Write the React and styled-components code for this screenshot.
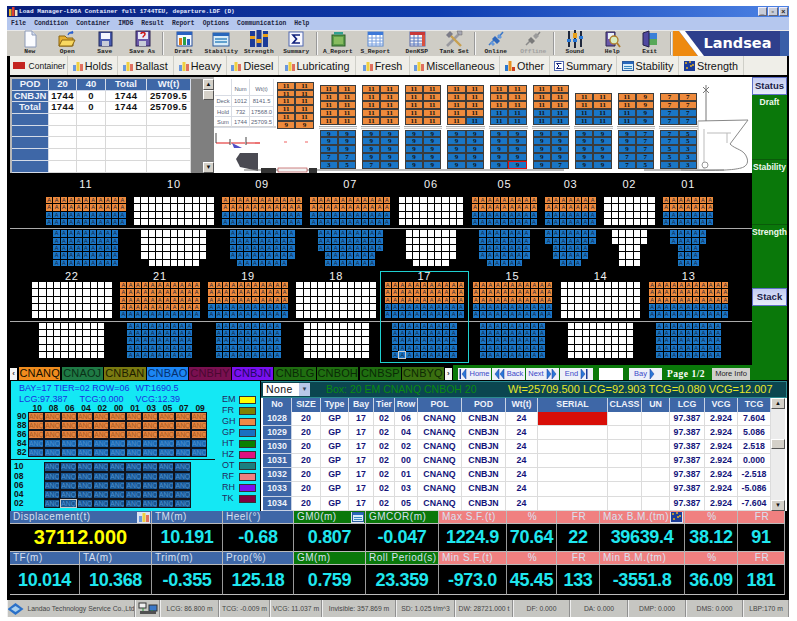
import React from "react";
import styled, { createGlobalStyle } from "styled-components";

const SANS = '"Liberation Sans", Arial, sans-serif';
const BITMAP = '"Liberation Mono", "Courier New", monospace';
const SERIF = '"Liberation Serif", "Times New Roman", serif';

const BLUE = "#3e67a7";
const GREEN = "#0a780a";
const SALMON = "#f08080";
const ORANGE = "#ee8a3c";
const CARGO = "#1a76c6";

const GlobalStyle = createGlobalStyle`
  html, body {
    margin: 0;
    padding: 0;
    background: #fff;
  }
  * {
    box-sizing: border-box;
  }
  svg {
    flex: none;
  }
`;

const Page = styled.div`
  width: 797px;
  height: 621px;
  padding: 6px 0 0 7px;
  overflow: hidden;
  font-family: ${SANS};
`;

const Window = styled.div`
  width: 782px;
  display: flex;
  flex-direction: column;
`;

/* title + menu */
const TitleBar = styled.div`
  height: 11px;
  display: flex;
  align-items: center;
  padding: 0 1px 0 2px;
  background: linear-gradient(90deg, #0a1f7a, #0d3cb0 55%, #4c82e4);
  color: #e6ecff;
  font: bold 6.1px/11px ${BITMAP};
  white-space: nowrap;
`;

const TitleText = styled.span`
  margin-left: 1px;
  flex: 1;
`;

const WinButtons = styled.div`
  display: flex;
  gap: 1px;
`;

const WinButton = styled.span`
  width: 9.5px;
  height: 9px;
  background: #c8ccd8;
  border: 1px solid #eef;
  border-right-color: #667;
  border-bottom-color: #667;
  color: #222;
  font: bold 7px/7px ${SANS};
  text-align: center;
`;

const MenuBar = styled.div`
  height: 13px;
  display: flex;
  align-items: center;
  gap: 8px;
  padding-left: 4px;
  background: #b5c7ee;
  color: #1c2440;
  font: bold 6.3px/13px ${BITMAP};
`;

/* toolbar */
const Toolbar = styled.div`
  height: 26px;
  display: flex;
  background: #cfcdc6;
  border-top: 1px solid #e8e8e8;
  padding-left: 4px;
`;

const Tool = styled.div`
  width: 37.5px;
  margin-left: ${(p) => p.$ml || 0}px;
  display: flex;
  flex-direction: column;
  align-items: center;
  color: ${(p) => (p.$off ? "#a0a0a0" : "#222")};
  font: bold 6.2px/9px ${BITMAP};
  white-space: nowrap;
`;

const ToolIcon = styled.div`
  height: 16px;
  display: flex;
  align-items: center;
`;

const ToolSep = styled.div`
  width: 2px;
  margin: 1px;
  border-left: 1px solid #999;
  border-right: 1px solid #f4f4f4;
`;

const Logo = styled.div`
  flex: 1;
  background: #2e3f8c;
  display: flex;
  align-items: center;
  overflow: hidden;
`;

const LogoMark = styled.svg`
  width: 31px;
  height: 25px;
`;

const LogoText = styled.span`
  color: #fff;
  font: bold 14.5px/25px "DejaVu Sans", ${SANS};
`;

const LogoEdge = styled.div`
  margin-left: auto;
  width: 9px;
  height: 25px;
  background: #3a5fa8;
`;

/* category tabs */
const TabBar = styled.div`
  height: 19px;
  display: flex;
  align-items: stretch;
  background: #efeee8;
  border-left: 3px solid #000;
  border-right: 2px solid #000;
`;

const Tab = styled.div`
  width: ${(p) => p.$w}px;
  display: flex;
  align-items: center;
  justify-content: center;
  gap: 2px;
  border-right: 1px solid #cfcfc8;
  color: #151515;
  font-size: ${(p) => p.$size || 10.8}px;
  white-space: nowrap;
`;

/* main frame */
const Frame = styled.div`
  background: #000;
  padding: 0 2px 5px 3px;
  display: flex;
  flex-direction: column;
`;

const Middle = styled.div`
  display: flex;
  height: 305px;
`;

const LeftPane = styled.div`
  width: 742px;
  display: flex;
  flex-direction: column;
`;

const TopRow = styled.div`
  height: 100px;
  display: flex;
  padding: 2px 0;
  background: #000;
`;

const PodPanel = styled.div`
  width: 204px;
  display: flex;
  background: #b8b8b8;
  padding: 2px 0 0 2px;
`;

const PodTable = styled.div`
  width: 179px;
  display: grid;
  grid-template-columns: 37px 28px 29px 41px 44px;
  grid-auto-rows: 11.7px;
  background: #fff;
`;

const PodHead = styled.div`
  background: ${BLUE};
  border-right: 1px solid #d4dbe8;
  border-bottom: 1px solid #d4dbe8;
  color: #eef2fa;
  font: bold 9.5px/10.5px ${SANS};
  text-align: center;
`;

const PodCell = styled.div`
  border-right: 1px solid #d8d8d8;
  border-bottom: 1px solid #d8d8d8;
  color: #111;
  font: bold 9.5px/10.5px ${SANS};
  letter-spacing: 0.4px;
  text-align: center;
`;

const Scroll = styled.div`
  width: ${(p) => p.$w}px;
  display: flex;
  flex-direction: column;
  background: ${(p) => p.$track};
`;

const ScrollBtn = styled.div`
  height: 11px;
  flex: none;
  background: #d4d0c8;
  border: 1px solid #fff;
  border-right-color: #555;
  border-bottom-color: #555;
  color: #111;
  font: 6px/8px ${SANS};
  text-align: center;
`;

const ScrollGap = styled.div`
  flex: ${(p) => p.$grow};
`;

const ScrollThumb = styled(ScrollBtn)`
  height: ${(p) => p.$h}px;
`;

const GrayStrip = styled.div`
  width: 12px;
  background: #7f7f7f;
`;

const ShipPanel = styled.div`
  position: relative;
  width: 538px;
  display: flex;
  background: #fff;
  overflow: hidden;
`;

const Hull = styled.svg`
  position: absolute;
  left: 0;
  top: 0;
`;

const LoadSummary = styled.div`
  position: relative;
  width: 63px;
  flex: none;
  height: 49px;
  padding: 2px 0 0 1px;
  display: grid;
  grid-template-columns: 17px 18px 24px;
  grid-template-rows: 17px repeat(3, 10.6px);
`;

const SummaryCell = styled.span`
  border-right: 1px solid #d8dce4;
  border-bottom: 1px solid #d8dce4;
  color: #5a6478;
  font: 5.8px/10px ${SANS};
  text-align: center;
  white-space: nowrap;
`;

const SummaryHead = styled(SummaryCell)`
  line-height: 20px;
`;

const ShipBays = styled.div`
  position: relative;
  display: flex;
  gap: 6px;
`;

const ShipBay = styled.div`
  width: 36.6px;
  display: flex;
  flex-direction: column;
`;

const DeckStack = styled.div`
  height: ${(p) => p.$h || 47.5}px;
  display: flex;
  flex-direction: column;
  justify-content: flex-end;
`;

const Hatch = styled.div`
  height: 3px;
  margin: 1px -1px 1px;
  background: #f4f4f4;
  border-top: 1px solid #aaa;
  border-bottom: 1px solid #ccc;
`;

const StackRow = styled.div`
  height: 7.9px;
  display: flex;
`;

const StackCell = styled.div`
  flex: 1;
  background: ${(p) => (p.$tone === "o" ? ORANGE : CARGO)};
  border: 1px solid ${(p) => (p.$hit ? "#e01010" : "#3c3c3c")};
  border-top-width: ${(p) => (p.$hit ? 1 : 0.5)}px;
  color: #111;
  font: bold 7px/6.5px ${SERIF};
  text-align: center;
`;

/* bay plan */
const BayArea = styled.div`
  position: relative;
  flex: 1;
  background: #000;
  display: flex;
  flex-direction: column;
`;

const DeckBand = styled.div`
  display: flex;
  gap: 8.5px;
  padding-left: ${(p) => p.$left}px;
  align-items: flex-end;
`;

const HoldBand = styled(DeckBand)`
  align-items: flex-start;
  margin-top: ${(p) => p.$mt}px;
`;

const Bay = styled.div`
  width: ${(p) => p.$cols * 7.33 - 1}px;
  display: flex;
  flex-direction: column;
  align-items: center;
  gap: 1px;
`;

const BayNo = styled.div`
  height: ${(p) => p.$h}px;
  padding-top: ${(p) => p.$pt}px;
  color: #f2f2f2;
  font: 11px/10px ${SANS};
  letter-spacing: 0.8px;
`;

const SlotRow = styled.div`
  display: flex;
  gap: 1px;
`;

const Slot = styled.div`
  width: 6.33px;
  height: 6.33px;
  background: ${(p) => (p.$tone === "o" ? ORANGE : p.$tone === "b" ? CARGO : "#fff")};
  outline: ${(p) => (p.$cursor ? "1px solid #c8c8c8" : "none")};
  color: #17233a;
  font: 5.5px/6.5px ${SANS};
  text-align: center;
  overflow: hidden;
`;

const BayRule = styled.div`
  height: 1px;
  margin-top: ${(p) => p.$mt}px;
  background: #aaa;
`;

const SelectBox = styled.div`
  position: absolute;
  left: 370px;
  top: 96px;
  width: 89px;
  height: 92px;
  border: 1.5px solid #1fd0d0;
`;

/* port tabs + page nav */
const PortStrip = styled.div`
  height: 15px;
  display: flex;
  background: #000;
`;

const PortTabs = styled.div`
  width: 443px;
  display: flex;
  align-items: center;
  gap: 1.2px;
  padding-top: 2px;
`;

const PortArrow = styled.div`
  width: 7px;
  height: 12px;
  margin-right: 0.8px;
  background: #f4f4f4;
  color: #333;
  font: bold 8px/12px ${SANS};
  text-align: center;
`;

const PortTab = styled.div`
  width: 41.4px;
  height: 13px;
  background: ${(p) => p.$bg};
  color: ${(p) => p.$fg};
  font: 11px/13px ${SANS};
  letter-spacing: 0.15px;
  text-align: center;
  white-space: nowrap;
  overflow: hidden;
`;

const PageNav = styled.div`
  flex: 1;
  display: flex;
  align-items: center;
  padding: 2px 0 0 5px;
  background: ${GREEN};
`;

const NavBtn = styled.div`
  width: ${(p) => p.$w || 33}px;
  height: 12px;
  margin-right: ${(p) => p.$mr || 1}px;
  display: flex;
  align-items: center;
  justify-content: center;
  gap: 2px;
  background: ${(p) => p.$bg || "#eef0f8"};
  color: ${(p) => p.$fg || "#3a48c8"};
  font: 7.5px/12px ${SANS};
  white-space: nowrap;
`;

const PageLabel = styled.div`
  width: 45px;
  color: #fff;
  font: bold 9.5px/12px ${SERIF};
  letter-spacing: 0.5px;
  white-space: nowrap;
`;

/* status column */
const StatusColumn = styled.div`
  width: 35px;
  display: flex;
  flex-direction: column;
  background: ${GREEN};
  border-top: 2px solid #000;
`;

const StatusBtn = styled.div`
  height: 18px;
  flex: none;
  background: linear-gradient(#c3ccf2, #e8ecfa);
  border: 1px solid #6070c8;
  color: #1a2048;
  font: bold 9.5px/16px ${SANS};
  text-align: center;
`;

const StatusSection = styled.div`
  height: ${(p) => p.$h}px;
  flex: none;
  padding-top: 2px;
  color: #eef8ee;
  font: bold 8.5px/11px ${SANS};
  text-align: center;
  border-top: ${(p) => (p.$line ? "1px solid #0a5a0a" : "none")};
`;

/* lower panels */
const Lower = styled.div`
  height: 131px;
  display: flex;
  padding-top: 1px;
  background: #000;
`;

const CyanPanel = styled.div`
  width: 249px;
  margin-left: 1px;
  display: flex;
  background: #14e8f4;
`;

const CyanLeft = styled.div`
  width: 209px;
  display: flex;
  flex-direction: column;
  padding-top: 2px;
`;

const InfoLine = styled.div`
  height: ${(p) => p.$h}px;
  padding-left: 8px;
  display: flex;
  gap: ${(p) => p.$gap}px;
  color: #1a30e0;
  font: 9px/${(p) => p.$h}px ${SANS};
  white-space: nowrap;
`;

const RowNums = styled.div`
  height: 8px;
  padding-left: 18px;
  display: flex;
  color: #111;
  font: bold 8.5px/8px ${SANS};
`;

const RowNum = styled.span`
  width: 16.3px;
  text-align: center;
`;

const StowRow = styled.div`
  height: 9.1px;
  display: flex;
`;

const StowLabel = styled.div`
  width: ${(p) => p.$w}px;
  padding-left: ${(p) => p.$pl}px;
  color: #111;
  font: bold 8.5px/9px ${SANS};
`;

const StowCell = styled.div`
  width: 16.3px;
  background: ${(p) => (p.$tone === "o" ? "#e48440" : p.$tone === "b" ? "#1a68b2" : "#185590")};
  border: 1px solid ${(p) => (p.$cursor ? "#c8c8c8" : "#10131c")};
  border-right-width: 0.5px;
  border-left-width: 0.5px;
  color: ${(p) => (p.$tone === "o" ? "#a85a20" : "#4d90d0")};
  font: 6.8px/7px ${SANS};
  text-align: center;
  overflow: hidden;
`;

const CyanRule = styled.div`
  height: 1px;
  margin: 2px 0 2px;
  width: 204px;
  background: #111;
`;

const Legend = styled.div`
  flex: 1;
  padding: 13px 0 0 2px;
  display: grid;
  grid-template-columns: 17px 17px;
  grid-auto-rows: 11px;
  align-items: center;
  color: #222a60;
  font: 9px/11px ${SANS};
`;

const Swatch = styled.div`
  height: 8px;
  background: ${(p) => p.$bg};
  border: 1px solid #333;
`;

const RightPane = styled.div`
  flex: 1;
  margin-left: 1px;
  display: flex;
  flex-direction: column;
  background: #fff;
`;

const InfoStrip = styled.div`
  height: 17px;
  display: flex;
  align-items: center;
  padding-left: 2px;
  background: #0b4650;
  border: 1px solid #2b8a90;
  border-left: none;
  font: 11px/15px ${SANS};
  white-space: nowrap;
`;

const NoneSelect = styled.div`
  width: 47px;
  height: 13px;
  display: flex;
  justify-content: space-between;
  background: #fff;
  color: #111;
  font: 10.5px/13px ${SANS};
  letter-spacing: 0.4px;
  padding-left: 3px;
`;

const SelectArrow = styled.span`
  width: 11px;
  background: #b8c8e8;
  color: #345;
  font: 6px/13px ${SANS};
  letter-spacing: 0;
  text-align: center;
`;

const BoxText = styled.span`
  margin-left: 16px;
  width: 182px;
  color: #0a8a10;
  font-size: 10.5px;
`;

const WeightText = styled.span`
  color: #e6e628;
`;

const TableRow = styled.div`
  flex: 1;
  display: flex;
  min-height: 0;
`;

const CargoTable = styled.div`
  width: 510px;
  padding-left: 2px;
  display: grid;
  grid-template-columns: 29px 29px 28px 25px 21px 23px 44px 44px 32px 70px 34px 28px 35px 33px 33px;
  grid-template-rows: 14px repeat(7, 14.1px);
  overflow: hidden;
`;

const HeadCell = styled.div`
  background: ${BLUE};
  border-right: 1px solid #c8d2e4;
  color: #eef2fa;
  font: bold 8.8px/13px ${SANS};
  text-align: center;
  white-space: nowrap;
`;

const NoCell = styled(HeadCell)`
  border-bottom: 1px solid #c8d2e4;
  line-height: 13.5px;
`;

const DataCell = styled.div`
  background: ${(p) => (p.$red ? "#d80e08" : "#fff")};
  border-right: 1px solid #dcdcdc;
  border-bottom: 1px solid #dcdcdc;
  color: #14147a;
  font: bold 8.8px/13.5px ${SANS};
  text-align: center;
`;

/* stats */
const StatsGrid = styled.div`
  display: grid;
  grid-template-columns: 70px 72px 71px 71px 72px 73px 68px 50px 43px 85px 53px 47px;
  grid-template-rows: 13px 28px 13px 30px;
  background: #000;
`;

const StatHead = styled.div`
  grid-column: span ${(p) => p.$span || 1};
  display: flex;
  align-items: center;
  justify-content: ${(p) => (p.$center ? "center" : "space-between")};
  padding: 0 1px 0 3px;
  background: ${(p) => p.$bg};
  border-right: 1px solid #bbb;
  border-bottom: 1px solid #bbb;
  color: ${(p) => p.$fg || "#d8e0f0"};
  font: 10px/12px ${SANS};
  letter-spacing: 0.5px;
  white-space: nowrap;
`;

const StatValue = styled.div`
  grid-column: span ${(p) => p.$span || 1};
  border-right: 1px solid #999;
  border-bottom: 1px solid #bbb;
  color: ${(p) => (p.$big ? "#ffff00" : "#1fe6ee")};
  font: bold ${(p) => (p.$big ? 20 : 18)}px/26px ${SANS};
  letter-spacing: ${(p) => (p.$big ? 0 : -0.35)}px;
  text-align: center;
  white-space: nowrap;
`;

const TallValue = styled(StatValue)`
  line-height: 30px;
`;

const HeadIcon = styled.span`
  display: flex;
  width: 13px;
  height: 11px;
  background: #dde4f2;
  align-items: center;
  justify-content: center;
`;

/* status bar */
const StatusBar = styled.div`
  height: 17px;
  display: flex;
  background: #c6c6c2;
  color: #444;
  font: 6.8px/16px ${SANS};
`;

const StatusItem = styled.div`
  width: ${(p) => p.$w}px;
  display: flex;
  align-items: center;
  justify-content: center;
  gap: 3px;
  border-right: 1px solid #8f8f8f;
  border-left: 1px solid #eee;
  white-space: nowrap;
  overflow: hidden;
`;

/* drawn bits */
const toolIcons = {
  new: (
    <>
      <path d="M5 1h7l4 4v12H5z" fill="#fbfcff" stroke="#8c9ab8" />
      <path d="M12 1v4h4" fill="#d8e0f0" stroke="#8c9ab8" />
    </>
  ),
  open: (
    <>
      <path d="M2 6h6l2 2h6v8H2z" fill="#e8b030" stroke="#8a6410" />
      <path d="M2 16l3-6h13l-3 6z" fill="#f8d860" stroke="#8a6410" />
      <path d="M11 5c1-3 4-3 5-2l-1-2M16 3l-3 0" fill="none" stroke="#2a60d0" strokeWidth="1.3" />
    </>
  ),
  save: (
    <>
      <rect x="4" y="2" width="13" height="14" fill="#4a5cb0" stroke="#20285c" />
      <rect x="6" y="3" width="9" height="6" fill="#f4f6ff" />
      <rect x="7" y="11" width="7" height="5" fill="#c8ccd8" />
    </>
  ),
  saveas: (
    <>
      <rect x="4" y="1" width="14" height="15" fill="#6a58a8" stroke="#2a2050" />
      <rect x="6" y="2" width="10" height="7" fill="#e8e8f8" />
      <rect x="7" y="11" width="7" height="5" fill="#c8ccd8" />
      <path d="M9 4c0-2 4-2 4 0 0 2-2 1.500-2 3.500" fill="none" stroke="#d01818" strokeWidth="1.5" />
    </>
  ),
  draft: (
    <>
      <rect x="3" y="2" width="15" height="14" fill="#f4f8ff" stroke="#28509c" />
      <rect x="3" y="2" width="15" height="3" fill="#2860c0" />
      <rect x="5" y="8" width="3" height="7" fill="#e07818" />
      <rect x="9" y="7" width="3" height="8" fill="#28a048" />
      <rect x="13" y="9" width="3" height="6" fill="#2860c0" />
    </>
  ),
  stability: (
    <>
      <rect x="2" y="3" width="16" height="13" fill="#d8ecf8" stroke="#2a5a9c" />
      <rect x="2" y="3" width="16" height="3" fill="#2868bc" />
      <path d="M4 9h12M4 12h12" stroke="#3a88c0" strokeWidth="1.5" />
    </>
  ),
  strength: (
    <>
      <rect x="1" y="1" width="5" height="16" fill="#1c3c98" />
      <rect x="7.500" y="0" width="5" height="17" fill="#1c3c98" />
      <rect x="14" y="1" width="5" height="16" fill="#1c3c98" />
      <rect x="1" y="6" width="5" height="3" fill="#e8a018" />
      <rect x="7.500" y="9" width="5" height="4" fill="#e8a018" />
      <rect x="14" y="4" width="5" height="3" fill="#e8a018" />
    </>
  ),
  summary: (
    <>
      <rect x="3" y="2" width="14" height="14" fill="#f8f8ff" stroke="#5068b0" />
      <path d="M14 5H7l3.500 4L7 13h7" fill="none" stroke="#10207c" strokeWidth="1.700" />
    </>
  ),
  areport: (
    <>
      <rect x="4" y="5" width="13" height="11" fill="#5e9c48" stroke="#2a5c28" />
      <rect x="6" y="7" width="9" height="7" fill="#88bc60" />
      <rect x="6" y="2" width="9" height="2.500" fill="#30a090" />
    </>
  ),
  sreport: (
    <>
      <rect x="3" y="2" width="15" height="14" fill="#fff" stroke="#5888d0" />
      <rect x="3" y="2" width="15" height="3" fill="#3c78d8" />
      <path d="M3 8h15M3 11h15M3 14h15M7 5v11M11 5v11M15 5v11" stroke="#78a0e0" />
    </>
  ),
  denksp: (
    <>
      <rect x="3" y="2" width="15" height="14" fill="#f8f4f4" stroke="#5868a8" />
      <rect x="3" y="2" width="15" height="3" fill="#c83838" />
      <path d="M3 8h15M3 11h15M3 14h15M7 5v11M11 5v11" stroke="#5878c0" />
      <rect x="15" y="5" width="3" height="11" fill="#d85040" />
    </>
  ),
  tankset: (
    <>
      <path d="M3 16L15 4" stroke="#9a9aa0" strokeWidth="2.600" />
      <path d="M17 16L6 5" stroke="#c8a050" strokeWidth="2.400" />
      <path d="M2 5l4-4 3 3-4 4z" fill="#7c7c88" />
      <path d="M13 1h5v4h-2l-2-1z" fill="#a8a8b4" stroke="#666" strokeWidth="0.500" />
    </>
  ),
  online: (
    <>
      <path d="M3 15l5-5M12 8l5-6" stroke="#3c78c8" strokeWidth="1.500" />
      <path d="M6 9l3-3 5 5-3 3z" fill="#2f68bc" />
      <path d="M4 13l2-2 3 3-2 2zM11 6l2-2 3 3-2 2z" fill="#6498dc" />
    </>
  ),
  offline: (
    <>
      <path d="M3 15l5-5M12 8l5-6" stroke="#8a8a8a" strokeWidth="1.500" />
      <path d="M5 10l3-3 4 4-3 3z" fill="#7a7a7a" />
      <path d="M10 6l3-3 3 3-3 3z" fill="#9a9a9a" />
    </>
  ),
  sound: (
    <>
      <path d="M4 1v16M10 0v18M16 1v16" stroke="#20283c" strokeWidth="2" />
      <rect x="2" y="9" width="4" height="3" fill="#2878d8" />
      <rect x="8" y="3" width="4" height="5" fill="#e8a018" />
      <rect x="8" y="9" width="4" height="3" fill="#2878d8" />
      <rect x="14" y="6" width="4" height="3" fill="#2878d8" />
    </>
  ),
  help: (
    <>
      <path d="M4 2h9v14H4z" fill="#6a58a8" stroke="#2a2450" />
      <rect x="6" y="3" width="6" height="6" fill="#e8f0f8" />
      <circle cx="12" cy="10" r="4" fill="#d8ecc0" stroke="#b07c28" strokeWidth="1.300" />
      <path d="M15 13l3 4" stroke="#b07c28" strokeWidth="1.800" />
    </>
  ),
  exit: (
    <>
      <rect x="8" y="3" width="9" height="12" fill="#58a858" />
      <rect x="8" y="3" width="9" height="6" fill="#3a80d8" />
      <path d="M3 3l6-2v16l-6-2z" fill="#5048a0" stroke="#242048" />
    </>
  ),
};

const ToolGlyph = ({ name }) => (
  <svg width="20" height="18" viewBox="0 0 20 18">
    {toolIcons[name]}
  </svg>
);

const TabGlyph = ({ kind }) => {
  if (kind === "container") {
    return (
      <svg width="15" height="9" viewBox="0 0 15 9">
        <rect x="1" y="1" width="12" height="7" fill="#c42420" />
      </svg>
    );
  }
  if (kind === "sum") {
    return (
      <svg width="10" height="10" viewBox="0 0 10 10">
        <rect x="0.500" y="0.500" width="9" height="9" fill="#fff" stroke="#5068b0" />
        <path d="M7.500 2.500h-5l2.500 2.500-2.500 2.500h5" fill="none" stroke="#10207c" />
      </svg>
    );
  }
  if (kind === "stab") {
    return (
      <svg width="12" height="10" viewBox="0 0 12 10">
        <rect x="0.500" y="0.500" width="11" height="9" fill="#d8ecf8" stroke="#2a5a9c" />
        <rect x="1" y="1" width="10" height="2" fill="#2868bc" />
        <path d="M2 5.500h8M2 7.500h8" stroke="#3a88c0" />
      </svg>
    );
  }
  if (kind === "strength") {
    return (
      <svg width="11" height="10" viewBox="0 0 11 10">
        <rect width="11" height="10" fill="#1c3c98" />
        <path d="M1 2h2M5 1h2M8 4h2M2 7h2M6 5h2" stroke="#e8b020" strokeWidth="1.500" />
      </svg>
    );
  }
  if (kind === "other") {
    return (
      <svg width="10" height="11" viewBox="0 0 10 11">
        <rect x="0" y="5" width="3" height="6" fill="#2a78d0" />
        <rect x="3.500" y="1" width="3" height="10" fill="#e89020" />
        <rect x="7" y="7" width="3" height="4" fill="#d04020" />
      </svg>
    );
  }
  return (
    <svg width="10" height="10" viewBox="0 0 10 10">
      <rect x="0" y="4" width="3" height="6" fill="#6a98e0" />
      <rect x="3.500" y="1" width="3" height="9" fill="#f0d040" />
      <rect x="7" y="3" width="3" height="7" fill="#e07060" />
    </svg>
  );
};

const NavGlyph = ({ flip, bar, double }) => (
  <svg width={double ? 11 : 8} height="10" viewBox={double ? "0 0 11 10" : "0 0 8 10"} transform={flip ? "scale(-1 1)" : undefined}>
    <path d="M1 0l4 5-4 5z" fill="#2a78d8" stroke="#1a3a98" strokeWidth="0.500" />
    {double && <path d="M6 0l4 5-4 5z" fill="#2a78d8" stroke="#1a3a98" strokeWidth="0.500" />}
    {bar && <rect x="6" y="0" width="1.500" height="10" fill="#1a3a98" />}
  </svg>
);

const CompanyGlyph = () => (
  <svg width="17" height="12" viewBox="0 0 17 12">
    <path d="M8.500 0l8 6-8 6-8-6z" fill="#2a70c8" />
    <path d="M4 6l4.500-3L13 6 8.500 9z" fill="#a8d0f0" />
  </svg>
);

const NetGlyph = () => (
  <svg width="20" height="14" viewBox="0 0 20 14">
    <rect x="1" y="1" width="7" height="5" fill="#f0f0f0" stroke="#333" />
    <rect x="11" y="3" width="8" height="6" fill="#3a78c8" stroke="#333" />
    <rect x="2" y="9" width="16" height="3" fill="#505050" />
    <path d="M5 6v3M14 9v-1" stroke="#2a9a3a" />
  </svg>
);

/* data */
const tools = [
  [
    ["new", "New"],
    ["open", "Open"],
    ["save", "Save"],
    ["saveas", "Save As"],
  ],
  [
    ["draft", "Draft"],
    ["stability", "Stability"],
    ["strength", "Strength"],
    ["summary", "Summary"],
  ],
  [
    ["areport", "A_Report"],
    ["sreport", "S_Report"],
    ["denksp", "DenKSP", 4],
    ["tankset", "Tank Set"],
  ],
  [
    ["online", "Online"],
    ["offline", "Offline"],
  ],
  [
    ["sound", "Sound"],
    ["help", "Help"],
    ["exit", "Exit"],
  ],
];

const tabs = [
  ["container", "Container", 58, 8.5],
  ["bars", "Holds", 50],
  ["bars", "Ballast", 56],
  ["bars", "Heavy", 53],
  ["bars", "Diesel", 52],
  ["bars", "Lubricating", 77],
  ["bars", "Fresh", 54],
  ["bars", "Miscellaneous", 90],
  ["other", "Other", 50],
  ["sum", "Summary", 67],
  ["stab", "Stability", 62],
  ["strength", "Strength", 65],
];

const r = (tone, a, b, n = 1) => Array.from({ length: n }, () => [tone, a, b]);
const shipBays = [
  { deckH: 52, deck: [...r("o", "11", "11", 5), ...r("o", "9", "9")], hold: null },
  { deck: r("o", "11", "11", 5), hold: [...r("b", "9", "9", 3), ...r("b", "7", "7"), ...r("b", "3", "5")] },
  { deck: r("o", "11", "11", 5), hold: [...r("b", "9", "9", 4), ...r("b", "7", "9")] },
  { deck: r("o", "11", "11", 5), hold: r("b", "9", "9", 5) },
  { deck: [...r("o", "11", "11", 4), [["o", "11"], ["b", "11"]]], hold: r("b", "9", "9", 5) },
  { deck: [...r("o", "11", "11", 3), ...r("b", "11", "11", 2)], hold: r("b", "9", "9", 5), hit: true },
  { deck: [...r("o", "11", "11", 3), ...r("b", "11", "11", 2)], hold: [...r("b", "9", "9", 4), ...r("b", "9", "7")] },
  { deck: [...r("o", "11", "11", 2), ...r("b", "11", "11", 2)], hold: r("b", "9", "9", 5) },
  { deck: [...r("o", "11", "9", 2), ...r("b", "11", "9", 2)], hold: [...r("b", "9", "7", 3), ...r("b", "7", "7"), ...r("b", "7", "5")] },
  { deck: [...r("o", "7", "7", 2), ...r("b", "7", "7", 2)], hold: [...r("b", "7", "5", 2), ...r("b", "5", "3", 2), ...r("b", "3", "3")] },
];

const ooBB = ["o", "o", "b", "b"];
const ws = ["w", "w", "w", "w"];
const topBays = [
  { no: "11", cols: 11, deck: ooBB, hold: [9, 9, 9, 9, 9], tone: "b" },
  { no: "10", cols: 11, deck: ws, hold: [9, 9, 9, 9, 7], tone: "w" },
  { no: "09", cols: 11, deck: ooBB, hold: [9, 9, 9, 9, 7], tone: "b" },
  { no: "07", cols: 11, deck: ooBB, hold: [9, 9, 9, 7, 7], tone: "b" },
  { no: "06", cols: 9, deck: ws, hold: [7, 7, 7, 7, 5], tone: "w" },
  { no: "05", cols: 9, deck: ooBB, hold: [7, 7, 7, 7, 5], tone: "b" },
  { no: "03", cols: 7, deck: ooBB, hold: [7, 7, 5, 5, 3], tone: "b" },
  { no: "02", cols: 7, deck: ws, hold: [5, 5, 3, 3, 3], tone: "w" },
  { no: "01", cols: 7, deck: ooBB, hold: [5, 5, 3, 3, 3], tone: "b" },
];

const o3b2 = ["o", "o", "o", "b", "b"];
const w5 = ["w", "w", "w", "w", "w"];
const nine5 = [9, 9, 9, 9, 9];
const bottomBays = [
  { no: "22", cols: 11, deck: w5, hold: nine5, tone: "w" },
  { no: "21", cols: 11, deck: ["o", "o", "o", "o", "b"], hold: nine5, tone: "b" },
  { no: "19", cols: 11, deck: o3b2, hold: nine5, tone: "b" },
  { no: "18", cols: 11, deck: w5, hold: nine5, tone: "w" },
  { no: "17", cols: 11, deck: o3b2, hold: nine5, tone: "b", cursor: [4, 1] },
  { no: "15", cols: 11, deck: o3b2, hold: nine5, tone: "b" },
  { no: "14", cols: 11, deck: w5, hold: nine5, tone: "w" },
  { no: "13", cols: 11, deck: o3b2, hold: nine5, tone: "b" },
];

const ports = [
  ["CNANQ", "#f08c1e", "#141000"],
  ["CNAOJ", "#1f7a45", "#0a3018"],
  ["CNBAN", "#7a7a10", "#1e1e00"],
  ["CNBAO", "#1c86f5", "#06306e"],
  ["CNBHY", "#7a1050", "#4a0830"],
  ["CNBJN", "#7a10f0", "#200860"],
  ["CNBLG", "#1f6e10", "#0a2a06"],
  ["CNBOH", "#1f6e10", "#0a2a06"],
  ["CNBSP", "#1f6e10", "#0a2a06"],
  ["CNBYQ", "#3a6f10", "#0e2a04"],
];

const legend = [
  ["EM", "#ffff00"],
  ["FR", "#808000"],
  ["GH", "#ee8844"],
  ["GP", "#1a70c0"],
  ["HT", "#0a8000"],
  ["HZ", "#e0107f"],
  ["OT", "#1a8080"],
  ["RF", "#f08080"],
  ["RH", "#7a10f0"],
  ["TK", "#800040"],
];

const cargoHead = ["SIZE", "Type", "Bay", "Tier", "Row", "POL", "POD", "Wt(t)", "SERIAL", "CLASS", "UN", "LCG", "VCG", "TCG"];
const cargoRows = [
  ["1028", "06", "7.604"],
  ["1029", "04", "5.086"],
  ["1030", "02", "2.518"],
  ["1031", "00", "0.000"],
  ["1032", "01", "-2.518"],
  ["1033", "03", "-5.086"],
  ["1034", "05", "-7.604"],
];

const statusItems = [
  ["LCG: 86.800 m", 59],
  ["TCG: -0.009 m", 51],
  ["VCG: 11.037 m", 52],
  ["Invisible: 357.869 m", 74],
  ["SD: 1.025 t/m^3", 59],
  ["DW: 28721.000 t", 58],
  ["DF: 0.000", 57],
  ["DA: 0.000", 58],
  ["DMP: 0.000", 58],
  ["DMS: 0.000", 57],
  ["LBP:170 m", 46],
];

const summaryRows = [
  ["", "Num", "Wt(t)"],
  ["Deck", "1012", "8141.5"],
  ["Hold", "732", "17568.0"],
  ["Sum", "1744", "25709.5"],
];

const BayBlock = ({ cols, tones, cursor, part, no, labelH, labelPt, row }) => {
  if (part === "deck") {
    return (
      <Bay $cols={cols}>
        <BayNo $h={labelH} $pt={labelPt}>
          {no}
        </BayNo>
        {tones.map((tone, i) => (
          <SlotRow key={i}>
            {Array.from({ length: cols }, (_, c) => (
              <Slot key={c} $tone={tone}>
                {tone === "w" ? "" : "A"}
              </Slot>
            ))}
          </SlotRow>
        ))}
      </Bay>
    );
  }
  return (
    <Bay $cols={cols}>
      {row.map((n, i) => (
        <SlotRow key={i}>
          {Array.from({ length: n }, (_, c) => {
            const isCursor = cursor && cursor[0] === i && cursor[1] === c;
            return (
              <Slot key={c} $tone={tones} $cursor={isCursor}>
                {tones === "w" ? "" : "A"}
              </Slot>
            );
          })}
        </SlotRow>
      ))}
    </Bay>
  );
};

const StowRows = ({ labels, tones, labelW, labelPl, count, cursor }) =>
  labels.map((label, i) => (
    <StowRow key={label}>
      <StowLabel $w={labelW} $pl={labelPl}>
        {label}
      </StowLabel>
      {Array.from({ length: count }, (_, c) => (
        <StowCell key={c} $tone={tones[i]} $cursor={cursor && cursor[0] === i && cursor[1] === c}>
          ANQ
        </StowCell>
      ))}
    </StowRow>
  ));

export default function App() {
  return (
    <Page>
      <GlobalStyle />
      <Window>
        <TitleBar>
          <svg width="9" height="9" viewBox="0 0 9 9">
            <rect y="2" width="2.500" height="7" fill="#e8b020" />
            <rect x="3" width="2.500" height="9" fill="#e04030" />
            <rect x="6" y="3" width="2.500" height="6" fill="#f0e0c0" />
          </svg>
          <TitleText>Load Manager-LD6A Container full 1744TEU, departure.LDF (D)</TitleText>
          <WinButtons>
            <WinButton>_</WinButton>
            <WinButton>▫</WinButton>
            <WinButton>×</WinButton>
          </WinButtons>
        </TitleBar>
        <MenuBar>
          <span>File</span>
          <span>Condition</span>
          <span>Container</span>
          <span>IMDG</span>
          <span>Result</span>
          <span>Report</span>
          <span>Options</span>
          <span>Communication</span>
          <span>Help</span>
        </MenuBar>
        <Toolbar>
          {tools.map((group, g) => (
            <React.Fragment key={g}>
              {group.map(([icon, label, ml]) => (
                <Tool key={icon} $off={icon === "offline"} $ml={ml}>
                  <ToolIcon>
                    <ToolGlyph name={icon} />
                  </ToolIcon>
                  {label}
                </Tool>
              ))}
              <ToolSep />
            </React.Fragment>
          ))}
          <Logo>
            <LogoMark viewBox="0 0 31 25">
              <path d="M0 0h6l19 25H0z" fill="#ee8a10" />
              <path d="M6 0h6l19 25h-6z" fill="#fff" />
            </LogoMark>
            <LogoText>Landsea</LogoText>
            <LogoEdge />
          </Logo>
        </Toolbar>
        <TabBar>
          {tabs.map(([kind, label, w, size]) => (
            <Tab key={label} $w={w} $size={size}>
              <TabGlyph kind={kind} />
              {label}
            </Tab>
          ))}
        </TabBar>
        <Frame>
          <Middle>
            <LeftPane>
              <TopRow>
                <PodPanel>
                  <PodTable>
                    {["POD", "20", "40", "Total", "Wt(t)"].map((h) => (
                      <PodHead key={h}>{h}</PodHead>
                    ))}
                    {[
                      ["CNBJN", "1744", "0", "1744", "25709.5"],
                      ["Total", "1744", "0", "1744", "25709.5"],
                      ["", "", "", "", ""],
                      ["", "", "", "", ""],
                      ["", "", "", "", ""],
                      ["", "", "", "", ""],
                      ["", "", "", "", ""],
                    ].map((row, i) =>
                      row.map((v, c) =>
                        c === 0 ? <PodHead key={`${i}-${c}`}>{v}</PodHead> : <PodCell key={`${i}-${c}`}>{v}</PodCell>
                      )
                    )}
                  </PodTable>
                  <GrayStrip />
                  <Scroll $w={11} $track="#7f7f7f">
                    <ScrollBtn>▲</ScrollBtn>
                    <ScrollThumb $h={10} />
                    <ScrollGap $grow={1} />
                    <ScrollBtn>▼</ScrollBtn>
                  </Scroll>
                </PodPanel>
                <ShipPanel>
                  <Hull width="538" height="96" viewBox="0 0 538 96">
                    <path d="M0 50h62" stroke="#aaa" fill="none" />
                    <path d="M2 66h44" stroke="#e01818" strokeWidth="1.200" strokeDasharray="14 1" />
                    <path d="M2 56v10M16 62v6M32 60v8" stroke="#444" fill="none" />
                    <path d="M18 66l10 5-8 0z" fill="#5050c8" />
                    <path d="M26 76h18v18l-18-4c-2-4-3-6-4-8z" fill="#4a4a52" />
                    <path d="M30 93h320M430 93h80" stroke="#777" fill="none" />
                    <rect x="47" y="91" width="15" height="5" fill="#333" />
                    <rect x="64" y="91" width="29" height="4" fill="#f2f2f2" stroke="#b03030" strokeWidth="0.600" />
                    <rect x="95" y="91" width="8" height="5" fill="#333" />
                    <path d="M70 65h420" stroke="#e82020" strokeWidth="0.700" strokeDasharray="3 18" />
                    <path d="M484 44l50-1-18 24c6 6 14 5 17 14 2 6 -2 9-6 10-8 2-20 3-60 2" fill="none" stroke="#888" />
                    <path d="M484 44v48M490 52v40M493 56h24M513 56v10" fill="none" stroke="#bbb" />
                    <path d="M492 8v36M489 10l6 6M495 10l-6 6" stroke="#777" fill="none" />
                    <circle cx="491" cy="88" r="3" fill="#fff" stroke="#999" />
                  </Hull>
                  <LoadSummary>
                    {summaryRows.map((row, i) =>
                      row.map((v, c) =>
                        i === 0 ? (
                          <SummaryHead key={c}>{v}</SummaryHead>
                        ) : (
                          <SummaryCell key={`${i}-${c}`}>{v}</SummaryCell>
                        )
                      )
                    )}
                  </LoadSummary>
                  <ShipBays>
                    {shipBays.map((bay, i) => {
                      const rowCells = (row) => (typeof row[0] === "string" ? [[row[0], row[1]], [row[0], row[2]]] : row);
                      return (
                        <ShipBay key={i}>
                          <DeckStack $h={bay.deckH}>
                            {bay.deck.map((row, k) => (
                              <StackRow key={k}>
                                {rowCells(row).map(([tone, v], c) => (
                                  <StackCell key={c} $tone={tone}>
                                    {v}
                                  </StackCell>
                                ))}
                              </StackRow>
                            ))}
                          </DeckStack>
                          {bay.hold && <Hatch />}
                          {bay.hold &&
                            bay.hold.map((row, k) => (
                              <StackRow key={k}>
                                {rowCells(row).map(([tone, v], c) => (
                                  <StackCell key={c} $tone={tone} $hit={bay.hit && k === 4 && c === 1}>
                                    {v}
                                  </StackCell>
                                ))}
                              </StackRow>
                            ))}
                        </ShipBay>
                      );
                    })}
                  </ShipBays>
                </ShipPanel>
              </TopRow>
              <BayArea>
                <DeckBand $left={36}>
                  {topBays.map((b) => (
                    <BayBlock key={b.no} part="deck" no={b.no} cols={b.cols} tones={b.deck} labelH={21} labelPt={4} />
                  ))}
                </DeckBand>
                <BayRule $mt={3} />
                <HoldBand $left={36} $mt={1}>
                  {topBays.map((b) => (
                    <BayBlock key={b.no} part="hold" cols={b.cols} tones={b.tone} row={b.hold} />
                  ))}
                </HoldBand>
                <DeckBand $left={22}>
                  {bottomBays.map((b) => (
                    <BayBlock key={b.no} part="deck" no={b.no} cols={b.cols} tones={b.deck} labelH={15} labelPt={5} />
                  ))}
                </DeckBand>
                <BayRule $mt={3.5} />
                <HoldBand $left={22} $mt={0.5}>
                  {bottomBays.map((b) => (
                    <BayBlock key={b.no} part="hold" cols={b.cols} tones={b.tone} row={b.hold} cursor={b.cursor} />
                  ))}
                </HoldBand>
                <SelectBox />
              </BayArea>
              <PortStrip>
                <PortTabs>
                  <PortArrow>‹</PortArrow>
                  {ports.map(([name, bg, fg]) => (
                    <PortTab key={name} $bg={bg} $fg={fg}>
                      {name}
                    </PortTab>
                  ))}
                  <PortArrow>›</PortArrow>
                </PortTabs>
                <PageNav>
                  <NavBtn>
                    <NavGlyph flip bar />
                    Home
                  </NavBtn>
                  <NavBtn $mr={0}>
                    <NavGlyph flip double />
                    Back
                  </NavBtn>
                  <NavBtn>
                    Next
                    <NavGlyph double />
                  </NavBtn>
                  <NavBtn $mr={6}>
                    End
                    <NavGlyph bar />
                  </NavBtn>
                  <NavBtn $w={24} $bg="#fff" $mr={6} />
                  <NavBtn $mr={5}>
                    Bay
                    <NavGlyph />
                  </NavBtn>
                  <PageLabel>Page 1/2</PageLabel>
                  <NavBtn $w={38} $bg="#d0d0cc" $fg="#222">
                    More Info
                  </NavBtn>
                </PageNav>
              </PortStrip>
            </LeftPane>
            <StatusColumn>
              <StatusBtn>Status</StatusBtn>
              <StatusSection $h={64}>Draft</StatusSection>
              <StatusSection $h={65} $line>
                Stability
              </StatusSection>
              <StatusSection $h={64} $line>
                Strength
              </StatusSection>
              <StatusBtn>Stack</StatusBtn>
            </StatusColumn>
          </Middle>
          <Lower>
            <CyanPanel>
              <CyanLeft>
                <InfoLine $h={11} $gap={6}>
                  <span>BAY=17 TIER=02 ROW=06</span>
                  <span>WT:1690.5</span>
                </InfoLine>
                <InfoLine $h={10} $gap={12}>
                  <span>LCG:97.387</span>
                  <span>TCG:0.000</span>
                  <span>VCG:12.39</span>
                </InfoLine>
                <RowNums>
                  {["10", "08", "06", "04", "02", "00", "01", "03", "05", "07", "09"].map((n) => (
                    <RowNum key={n}>{n}</RowNum>
                  ))}
                </RowNums>
                <StowRows labels={["90", "88", "86", "84", "82"]} tones={["o", "o", "o", "b", "b"]} labelW={17} labelPl={6} count={11} />
                <CyanRule />
                <StowRows
                  labels={["10", "08", "06", "04", "02"]}
                  tones={["h", "h", "h", "h", "h"]}
                  labelW={33}
                  labelPl={3}
                  count={9}
                  cursor={[4, 1]}
                />
              </CyanLeft>
              <Legend>
                {legend.map(([name, color]) => (
                  <React.Fragment key={name}>
                    <span>{name}</span>
                    <Swatch $bg={color} />
                  </React.Fragment>
                ))}
              </Legend>
            </CyanPanel>
            <RightPane>
              <InfoStrip>
                <NoneSelect>
                  None
                  <SelectArrow>▼</SelectArrow>
                </NoneSelect>
                <BoxText>Box: 20 EM CNANQ CNBOH 20</BoxText>
                <WeightText>Wt=25709.500 LCG=92.903 TCG=0.080 VCG=12.007</WeightText>
              </InfoStrip>
              <TableRow>
                <CargoTable>
                  <HeadCell>No</HeadCell>
                  {cargoHead.map((h) => (
                    <HeadCell key={h}>{h}</HeadCell>
                  ))}
                  {cargoRows.map(([no, row, tcg], i) => (
                    <React.Fragment key={no}>
                      <NoCell>{no}</NoCell>
                      <DataCell>20</DataCell>
                      <DataCell>GP</DataCell>
                      <DataCell>17</DataCell>
                      <DataCell>02</DataCell>
                      <DataCell>{row}</DataCell>
                      <DataCell>CNANQ</DataCell>
                      <DataCell>CNBJN</DataCell>
                      <DataCell>24</DataCell>
                      <DataCell $red={i === 0} />
                      <DataCell />
                      <DataCell />
                      <DataCell>97.387</DataCell>
                      <DataCell>2.924</DataCell>
                      <DataCell>{tcg}</DataCell>
                    </React.Fragment>
                  ))}
                </CargoTable>
                <Scroll $w={14} $track="#ececec">
                  <ScrollBtn>▲</ScrollBtn>
                  <ScrollGap $grow={3} />
                  <ScrollThumb $h={10} />
                  <ScrollGap $grow={5} />
                  <ScrollBtn>▼</ScrollBtn>
                </Scroll>
              </TableRow>
            </RightPane>
          </Lower>
          <StatsGrid>
            <StatHead $span={2} $bg={BLUE}>
              Displacement(t)
              <HeadIcon>
                <TabGlyph kind="bars" />
              </HeadIcon>
            </StatHead>
            <StatHead $bg={BLUE}>TM(m)</StatHead>
            <StatHead $bg={BLUE}>Heel(°)</StatHead>
            <StatHead $bg={GREEN}>
              GM0(m)
              <HeadIcon>
                <TabGlyph kind="stab" />
              </HeadIcon>
            </StatHead>
            <StatHead $bg={GREEN}>GMCOR(m)</StatHead>
            <StatHead $bg={SALMON}>Max S.F.(t)</StatHead>
            <StatHead $bg={SALMON} $center>%</StatHead>
            <StatHead $bg={SALMON} $center>FR</StatHead>
            <StatHead $bg={SALMON}>
              Max B.M.(tm)
              <HeadIcon>
                <TabGlyph kind="strength" />
              </HeadIcon>
            </StatHead>
            <StatHead $bg={SALMON} $center>%</StatHead>
            <StatHead $bg={SALMON} $center>FR</StatHead>

            <StatValue $span={2} $big>37112.000</StatValue>
            <StatValue>10.191</StatValue>
            <StatValue>-0.68</StatValue>
            <StatValue>0.807</StatValue>
            <StatValue>-0.047</StatValue>
            <StatValue>1224.9</StatValue>
            <StatValue>70.64</StatValue>
            <StatValue>22</StatValue>
            <StatValue>39639.4</StatValue>
            <StatValue>38.12</StatValue>
            <StatValue>91</StatValue>

            <StatHead $bg={BLUE}>TF(m)</StatHead>
            <StatHead $bg={BLUE}>TA(m)</StatHead>
            <StatHead $bg={BLUE}>Trim(m)</StatHead>
            <StatHead $bg={BLUE}>Prop(%)</StatHead>
            <StatHead $bg={GREEN}>GM(m)</StatHead>
            <StatHead $bg={GREEN}>Roll Period(s)</StatHead>
            <StatHead $bg={SALMON}>Min S.F.(t)</StatHead>
            <StatHead $bg={SALMON} $center>%</StatHead>
            <StatHead $bg={SALMON} $center>FR</StatHead>
            <StatHead $bg={SALMON}>Min B.M.(tm)</StatHead>
            <StatHead $bg={SALMON} $center>%</StatHead>
            <StatHead $bg={SALMON} $center>FR</StatHead>

            <TallValue>10.014</TallValue>
            <TallValue>10.368</TallValue>
            <TallValue>-0.355</TallValue>
            <TallValue>125.18</TallValue>
            <TallValue>0.759</TallValue>
            <TallValue>23.359</TallValue>
            <TallValue>-973.0</TallValue>
            <TallValue>45.45</TallValue>
            <TallValue>133</TallValue>
            <TallValue>-3551.8</TallValue>
            <TallValue>36.09</TallValue>
            <TallValue>181</TallValue>
          </StatsGrid>
        </Frame>
        <StatusBar>
          <StatusItem $w={128}>
            <CompanyGlyph />
            Landao Technology Service Co.,Ltd
          </StatusItem>
          <StatusItem $w={25}>
            <NetGlyph />
          </StatusItem>
          {statusItems.map(([text, w]) => (
            <StatusItem key={text} $w={w}>
              {text}
            </StatusItem>
          ))}
        </StatusBar>
      </Window>
    </Page>
  );
}
